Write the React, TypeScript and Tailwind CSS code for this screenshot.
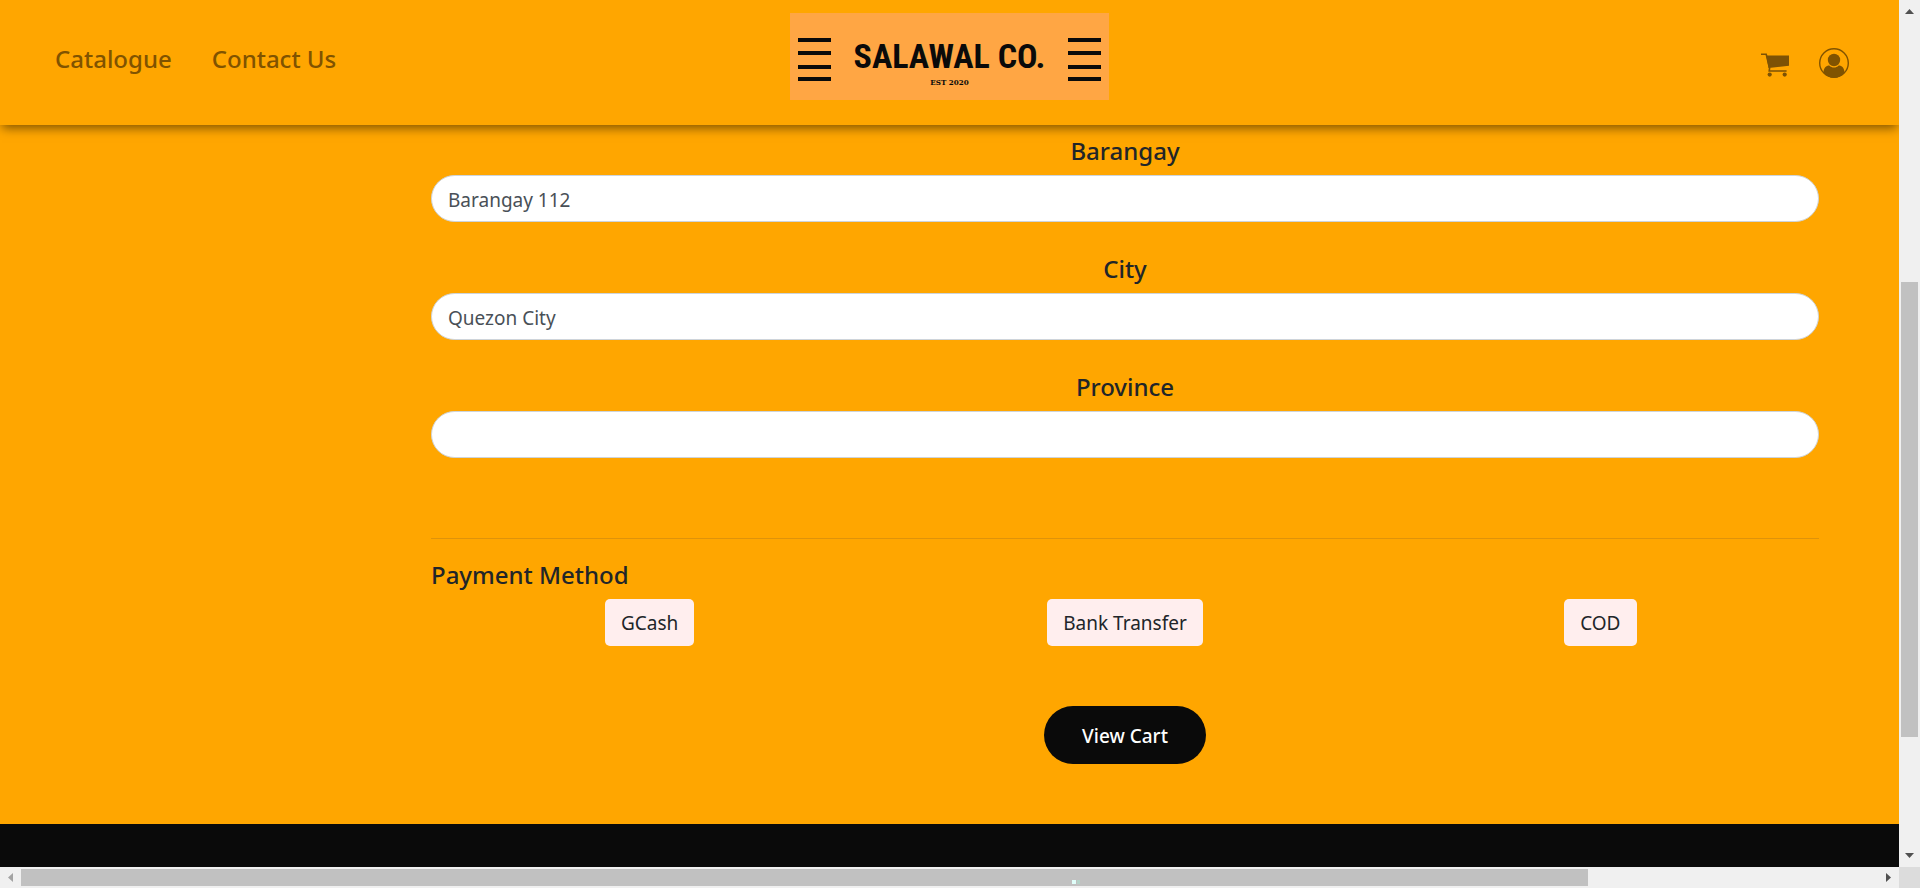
import React from "react";

const fields = [
  { id: "barangay", label: "Barangay", value: "Barangay 112" },
  { id: "city", label: "City", value: "Quezon City" },
  { id: "province", label: "Province", value: "" },
];

const methods = ["GCash", "Bank Transfer", "COD"];

function Stripes() {
  return (
    <svg width="33" height="44" viewBox="0 0 33 44" fill="#0a0a0a" aria-hidden="true">
      <rect x="0" y="0" width="33" height="4" />
      <rect x="0" y="13" width="33" height="4" />
      <rect x="0" y="27" width="33" height="4" />
      <rect x="0" y="39" width="33" height="4" />
    </svg>
  );
}

function Logo() {
  return (
    <a
      href="#home"
      className="flex h-[87px] w-[319px] items-center justify-between bg-[#ffa644] px-2 pt-1.5 text-[#0a0a0a]"
    >
      <Stripes />
      <span className="flex flex-col items-center whitespace-nowrap pt-1">
        <span className="font-['Roboto_Condensed','Liberation_Sans_Narrow','Liberation_Sans',sans-serif] text-[34px] leading-10 font-bold">
          SALAWAL CO.
        </span>
        <span className="font-['DejaVu_Serif_Condensed','DejaVu_Serif',serif] text-[8px] leading-3 font-bold">
          EST 2020
        </span>
      </span>
      <Stripes />
    </a>
  );
}

function CartIcon() {
  return (
    <svg width="28" height="24" viewBox="0 0 28 24" aria-hidden="true">
      <path d="M0 1.200h5.200L8.600 15.200 8.200 18h17.400" fill="none" stroke="#7d5205" strokeWidth="1.600" />
      <path d="M5.200 2.500H28v10.200L7.600 14.900z" fill="#7d5205" />
      <circle cx="8.700" cy="21.600" r="2.100" fill="#7d5205" />
      <circle cx="23.700" cy="21.600" r="2.100" fill="#7d5205" />
    </svg>
  );
}

function UserIcon() {
  return (
    <svg width="30" height="30" viewBox="0 0 30 30" fill="#805300" aria-hidden="true">
      <circle cx="15" cy="15" r="14.300" fill="none" stroke="#805300" strokeWidth="1.400" />
      <circle cx="15" cy="12" r="6.200" />
      <path d="M4.400 24.400C4.800 20.200 7 17.500 10.300 17.500c1.400 1.500 3 2.100 4.700 2.100s3.300-.6 4.700-2.100c3.300 0 5.500 2.700 5.900 6.900C22.800 27.700 19.200 30 15 30S7.200 27.700 4.400 24.400z" />
    </svg>
  );
}

function VerticalScrollbar() {
  return (
    <div className="flex flex-col items-center bg-[#f0f0f0]" aria-hidden="true">
      <svg width="21" height="21" viewBox="0 0 21 21" fill="#505050">
        <path d="M6 14h9l-4.500-5z" />
      </svg>
      <div className="flex w-full flex-1 flex-col items-center">
        <div className="flex-[261]" />
        <div className="w-[17px] flex-[455] bg-[#c1c1c1]" />
        <div className="flex-[109]" />
      </div>
      <svg width="21" height="21" viewBox="0 0 21 21" fill="#505050">
        <path d="M6 7h9l-4.500 5z" />
      </svg>
    </div>
  );
}

function HorizontalScrollbar() {
  return (
    <div className="flex items-center bg-[#f0f0f0]" aria-hidden="true">
      <svg width="21" height="21" viewBox="0 0 21 21" fill="#a3a3a3">
        <path d="M13 6v9l-5-4.500z" />
      </svg>
      <div className="flex flex-1">
        <div className="flex h-[17px] flex-[1567] items-end bg-[#c1c1c1] pb-0.5">
          <div className="flex-[1051]" />
          <div className="flex flex-[516] gap-px">
            <span className="size-1 bg-[#e0fffa]" />
            <span className="h-1 w-[3px] bg-[#b4d3c8]" />
          </div>
        </div>
        <div className="flex-[290]" />
      </div>
      <svg width="21" height="21" viewBox="0 0 21 21" fill="#505050">
        <path d="M8 6v9l5-4.500z" />
      </svg>
    </div>
  );
}

export default function App() {
  return (
    <div className="grid h-screen grid-cols-[minmax(0,1fr)_21px] grid-rows-[minmax(0,1fr)_21px] font-['Noto_Sans','Open_Sans',sans-serif] text-[#212529]">
      <div className="flex flex-col overflow-hidden bg-[#ffa600]">
        <header className="z-10 grid h-[125px] shrink-0 grid-cols-[1fr_auto_1fr] items-start bg-[#ffa600] px-[50px] pt-[13px] shadow-[0_5px_10px_-2px_rgba(0,0,0,0.5)]">
          <nav className="flex gap-10 pt-[30px] pl-[5px] text-2xl font-medium text-[#805300]">
            <a href="#catalogue">Catalogue</a>
            <a href="#contact">Contact Us</a>
          </nav>
          <Logo />
          <div className="flex items-center justify-end gap-[30px] pt-[35px]">
            <a href="#cart" aria-label="Cart" className="pt-1">
              <CartIcon />
            </a>
            <a href="#account" aria-label="Account">
              <UserIcon />
            </a>
          </div>
        </header>

        <main className="flex-1 pt-2.5 pr-20 pl-[431px]">
          <form onSubmit={(event) => event.preventDefault()}>
            <div className="flex flex-col gap-[31px]">
              {fields.map((field) => (
                <div key={field.id} className="flex flex-col gap-2">
                  <label htmlFor={field.id} className="text-center text-2xl font-medium">
                    {field.label}
                  </label>
                  <input
                    id={field.id}
                    type="text"
                    defaultValue={field.value}
                    className="h-[47px] w-full rounded-full border border-[#ced4da] bg-white px-4 pt-0.5 text-[19px] text-[#495057] outline-none"
                  />
                </div>
              ))}
            </div>

            <hr className="mt-20 border-[#df930a]" />

            <h2 className="mt-5 text-2xl font-medium">Payment Method</h2>
            <div className="-mx-[19px] mt-2 grid grid-cols-3 justify-items-center">
              {methods.map((method) => (
                <button
                  key={method}
                  type="button"
                  className="h-[47px] rounded-[5px] bg-[#ffeeee] px-4 pt-0.5 text-[19px]"
                >
                  {method}
                </button>
              ))}
            </div>

            <div className="mt-[60px] flex justify-center">
              <button
                type="submit"
                className="h-[58px] rounded-full bg-[#0a0a0a] px-[38px] pt-0.5 text-[19px] font-medium text-white"
              >
                View Cart
              </button>
            </div>
          </form>
        </main>

        <footer className="h-[43px] shrink-0 bg-[#0a0a0a]" />
      </div>
      <VerticalScrollbar />
      <HorizontalScrollbar />
      <div className="bg-[#dcdcdc]" />
    </div>
  );
}
